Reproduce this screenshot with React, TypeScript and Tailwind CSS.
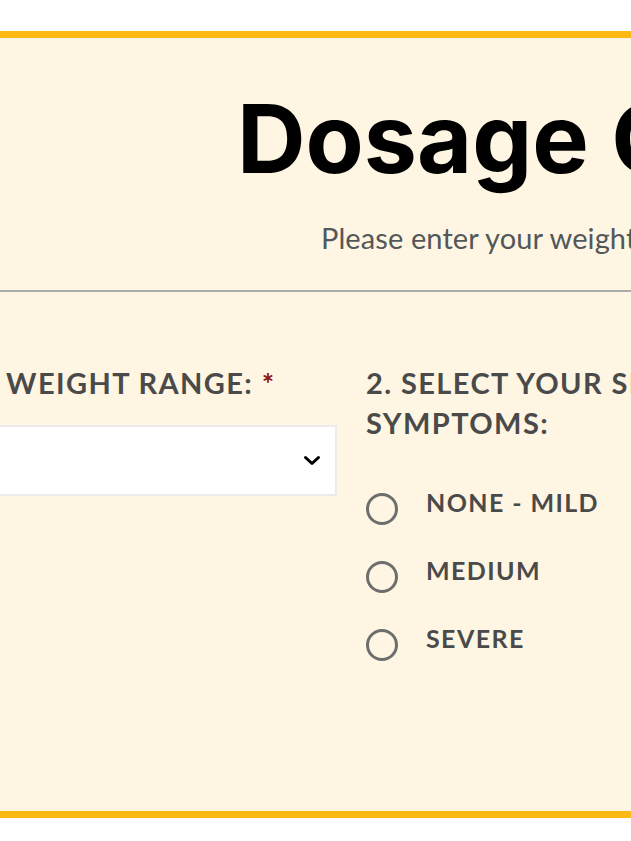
import React, { useState } from 'react';

const severityOptions = ['NONE - MILD', 'MEDIUM', 'SEVERE'];

export default function App() {
  const [severity, setSeverity] = useState<string | null>(null);

  return (
    <div className="min-h-screen bg-white overflow-hidden pt-[31px]">
      <section className="h-[787px] bg-[#fef6e2] border-y-[7px] border-[#fdb913]">
        {/* Header */}
        <div className="pt-[53px] pl-[237px] whitespace-nowrap">
          <h1 className="text-[95px] leading-none font-bold text-black tracking-[0px] font-['Inter',sans-serif]">
            Dosage Calculator
          </h1>
        </div>
        <p className="mt-[37px] pl-[321px] whitespace-nowrap text-[29px] leading-none tracking-[0.1px] text-[#53575a] font-['Lato',sans-serif]">
          Please enter your weight and symptoms below
        </p>
        <div className="mt-[38px] h-[2px] bg-[#a9aeac]" />

        {/* Form */}
        <div className="flex gap-[29px] pt-[71px] font-['Lato',sans-serif]">
          {/* Weight */}
          <div className="w-[345px] -ml-[8px] shrink-0">
            <label className="block pl-[14px] whitespace-nowrap text-[29px] leading-[40px] font-bold tracking-[1.4px] text-[#4a4a4a]">
              WEIGHT RANGE: <span className="text-[#8b1414]">*</span>
            </label>
            <div className="mt-[22px] h-[71px] bg-white border-2 border-[#ebebeb] flex items-center justify-end pr-[14px]">
              <svg width="18" height="11" viewBox="0 0 18 11" fill="none">
                <path d="M2.5 2.5l6.5 6 6.5-6" stroke="#000" strokeWidth="3" strokeLinecap="round" strokeLinejoin="round" />
              </svg>
            </div>
          </div>

          {/* Severity */}
          <div className="shrink-0">
            <h2 className="whitespace-nowrap text-[29px] leading-[40px] font-bold tracking-[1.4px] text-[#4a4a4a]">
              2. SELECT YOUR SEVERITY OF
              <br />
              SYMPTOMS:
            </h2>
            <div className="mt-[44px] flex flex-col gap-[30px]">
              {severityOptions.map((opt) => (
                <button
                  key={opt}
                  type="button"
                  onClick={() => setSeverity(opt)}
                  className="flex items-start gap-[28px] text-left"
                >
                  <span className="mt-[6px] w-[32px] h-[32px] rounded-full border-[3px] border-[#6e6e6e] flex items-center justify-center">
                    {severity === opt && <span className="w-[14px] h-[14px] rounded-full bg-[#6e6e6e]" />}
                  </span>
                  <span className="text-[25px] leading-[30px] font-bold tracking-[1.4px] text-[#4a4a4a]">{opt}</span>
                </button>
              ))}
            </div>
          </div>
        </div>
      </section>
    </div>
  );
}
